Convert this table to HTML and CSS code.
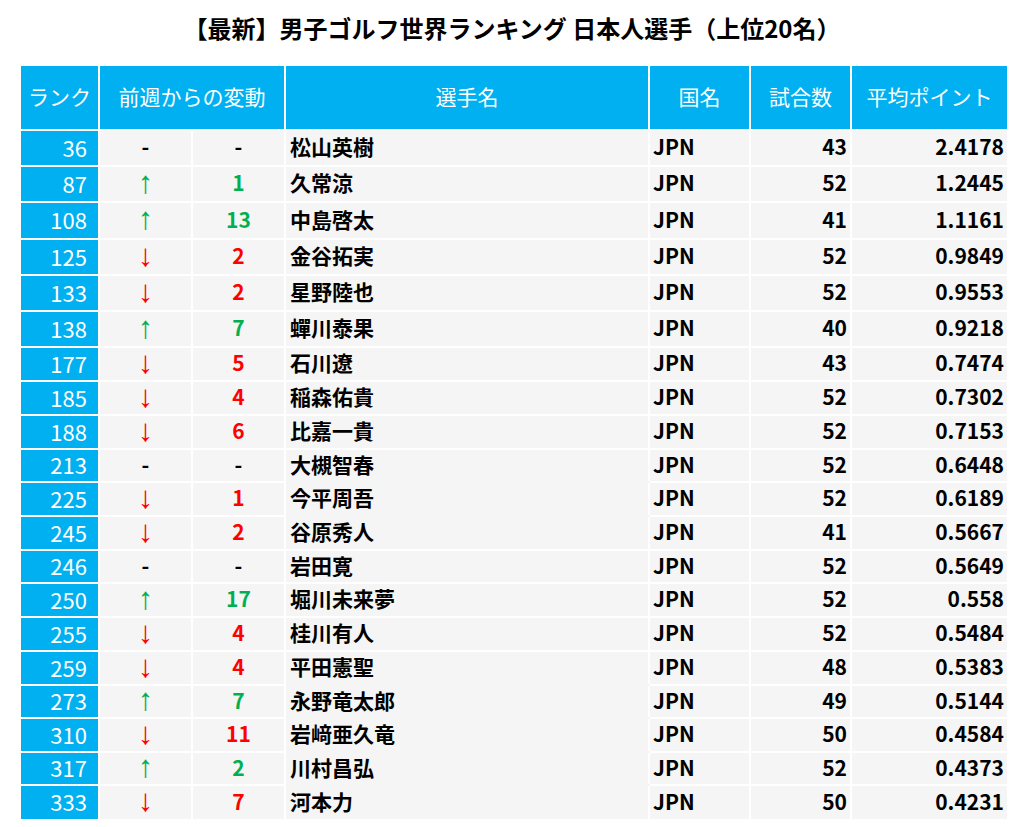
FILE: index.html
```html
<!DOCTYPE html>
<html lang="ja">
<head>
<meta charset="utf-8">
<title>男子ゴルフ世界ランキング 日本人選手</title>
<link rel="stylesheet" href="styles.css">
</head>
<body>
<h1 class="title">【最新】男子ゴルフ世界ランキング 日本人選手（上位20名）</h1>
<table class="rank-table">
  <colgroup>
    <col class="c-rank"><col class="c-arrow"><col class="c-diff"><col class="c-name"><col class="c-country"><col class="c-games"><col class="c-points">
  </colgroup>
  <thead>
    <tr class="head">
      <th>ランク</th>
      <th colspan="2">前週からの変動</th>
      <th>選手名</th>
      <th>国名</th>
      <th>試合数</th>
      <th>平均ポイント</th>
    </tr>
  </thead>
  <tbody>
    <tr class="h36"><td class="rank">36</td><td class="dash">-</td><td class="diff">-</td><td class="name">松山英樹</td><td class="country">JPN</td><td class="num">43</td><td class="num">2.4178</td></tr>
    <tr class="h36"><td class="rank">87</td><td class="arrow up">↑</td><td class="diff up">1</td><td class="name">久常涼</td><td class="country">JPN</td><td class="num">52</td><td class="num">1.2445</td></tr>
    <tr class="h37"><td class="rank">108</td><td class="arrow up">↑</td><td class="diff up">13</td><td class="name">中島啓太</td><td class="country">JPN</td><td class="num">41</td><td class="num">1.1161</td></tr>
    <tr class="h36"><td class="rank">125</td><td class="arrow down">↓</td><td class="diff down">2</td><td class="name">金谷拓実</td><td class="country">JPN</td><td class="num">52</td><td class="num">0.9849</td></tr>
    <tr class="h36"><td class="rank">133</td><td class="arrow down">↓</td><td class="diff down">2</td><td class="name">星野陸也</td><td class="country">JPN</td><td class="num">52</td><td class="num">0.9553</td></tr>
    <tr class="h36"><td class="rank">138</td><td class="arrow up">↑</td><td class="diff up">7</td><td class="name">蟬川泰果</td><td class="country">JPN</td><td class="num">40</td><td class="num">0.9218</td></tr>
    <tr class="h34"><td class="rank">177</td><td class="arrow down">↓</td><td class="diff down">5</td><td class="name">石川遼</td><td class="country">JPN</td><td class="num">43</td><td class="num">0.7474</td></tr>
    <tr class="h34"><td class="rank">185</td><td class="arrow down">↓</td><td class="diff down">4</td><td class="name">稲森佑貴</td><td class="country">JPN</td><td class="num">52</td><td class="num">0.7302</td></tr>
    <tr class="h34"><td class="rank">188</td><td class="arrow down">↓</td><td class="diff down">6</td><td class="name">比嘉一貴</td><td class="country">JPN</td><td class="num">52</td><td class="num">0.7153</td></tr>
    <tr class="h33"><td class="rank">213</td><td class="dash">-</td><td class="diff">-</td><td class="name open">大槻智春</td><td class="country">JPN</td><td class="num">52</td><td class="num">0.6448</td></tr>
    <tr class="h34"><td class="rank">225</td><td class="arrow down">↓</td><td class="diff down">1</td><td class="name open">今平周吾</td><td class="country">JPN</td><td class="num">52</td><td class="num">0.6189</td></tr>
    <tr class="h34"><td class="rank">245</td><td class="arrow down">↓</td><td class="diff down">2</td><td class="name">谷原秀人</td><td class="country">JPN</td><td class="num">41</td><td class="num">0.5667</td></tr>
    <tr class="h33"><td class="rank">246</td><td class="dash">-</td><td class="diff">-</td><td class="name">岩田寛</td><td class="country">JPN</td><td class="num">52</td><td class="num">0.5649</td></tr>
    <tr class="h34"><td class="rank">250</td><td class="arrow up">↑</td><td class="diff up">17</td><td class="name">堀川未来夢</td><td class="country">JPN</td><td class="num">52</td><td class="num">0.558</td></tr>
    <tr class="h34"><td class="rank">255</td><td class="arrow down">↓</td><td class="diff down">4</td><td class="name">桂川有人</td><td class="country">JPN</td><td class="num">52</td><td class="num">0.5484</td></tr>
    <tr class="h34"><td class="rank">259</td><td class="arrow down">↓</td><td class="diff down">4</td><td class="name open">平田憲聖</td><td class="country">JPN</td><td class="num">48</td><td class="num">0.5383</td></tr>
    <tr class="h33"><td class="rank">273</td><td class="arrow up">↑</td><td class="diff up">7</td><td class="name open">永野竜太郎</td><td class="country">JPN</td><td class="num">49</td><td class="num">0.5144</td></tr>
    <tr class="h34"><td class="rank">310</td><td class="arrow down">↓</td><td class="diff down">11</td><td class="name open">岩﨑亜久竜</td><td class="country">JPN</td><td class="num">50</td><td class="num">0.4584</td></tr>
    <tr class="h33"><td class="rank">317</td><td class="arrow up">↑</td><td class="diff up">2</td><td class="name open">川村昌弘</td><td class="country">JPN</td><td class="num">52</td><td class="num">0.4373</td></tr>
    <tr class="h34"><td class="rank">333</td><td class="arrow down">↓</td><td class="diff down">7</td><td class="name">河本力</td><td class="country">JPN</td><td class="num">50</td><td class="num">0.4231</td></tr>
  </tbody>
</table>
</body>
</html>
```

FILE: styles.css
```css
html, body {
  margin: 0;
  padding: 0;
  background: #ffffff;
}

body {
  font-family: "Noto Sans CJK JP", "Noto Sans", sans-serif;
  color: #000000;
}

.title {
  margin: 0 0 10px 0;
  height: 56px;
  line-height: 56px;
  font-size: 24px;
  font-weight: 700;
  text-align: center;
  color: #000000;
}

.rank-table {
  margin-left: 21px;
  width: 986px;
  table-layout: fixed;
  border-collapse: collapse;
  border: hidden;
  font-size: 21px;
}

.c-rank { width: 78px; }
.c-arrow { width: 93px; }
.c-diff { width: 93px; }
.c-name { width: 364px; }
.c-country { width: 101px; }
.c-games { width: 101px; }
.c-points { width: 156px; }

.rank-table th,
.rank-table td {
  border: 2px solid #ffffff;
  padding: 0 0 3px 0;
  white-space: nowrap;
  line-height: 1;
  vertical-align: middle;
}

.head { height: 64px; }

.rank-table th {
  background: #00b0f0;
  color: #ffffff;
  font-weight: 400;
  text-align: center;
}

.h37 { height: 37px; }
.h36 { height: 36px; }
.h34 { height: 34px; }
.h33 { height: 33px; }

.rank-table td {
  background: #f5f5f5;
  font-weight: 700;
}

.rank-table td.rank {
  background: #00b0f0;
  color: #ffffff;
  font-weight: 400;
  font-size: 22px;
  text-align: right;
  padding-right: 11px;
}

.rank-table td.arrow {
  text-align: center;
  font-family: "Liberation Sans", "DejaVu Sans", sans-serif;
  font-weight: 400;
  font-size: 31px;
  line-height: 20px;
}

.rank-table td.dash,
.rank-table td.diff {
  text-align: center;
}

.rank-table td.name {
  text-align: left;
  padding-left: 4px;
}

.rank-table td.name.open {
  border-bottom-color: #f5f5f5;
}

.rank-table td.country {
  text-align: left;
  padding-left: 3px;
}

.rank-table td.num {
  text-align: right;
  padding-right: 3px;
}

.up { color: #00b050; }
.down { color: #ff0000; }
```
